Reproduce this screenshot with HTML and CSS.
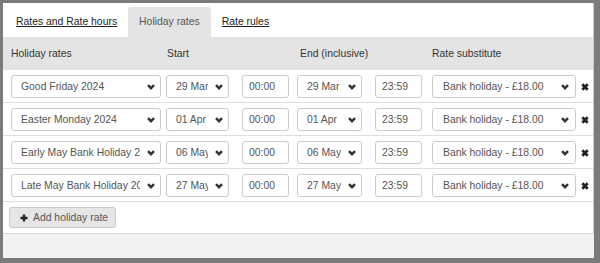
FILE: index.html
```html
<!DOCTYPE html>
<html>
<head>
<meta charset="utf-8">
<link rel="stylesheet" href="styles.css">
</head>
<body>
<div class="window">
  <div class="panel">
    <nav class="tabs">
      <a class="tab">Rates and Rate hours</a>
      <span class="tab active">Holiday rates</span>
      <a class="tab">Rate rules</a>
    </nav>
    <div class="grid head">
      <div class="h c1">Holiday rates</div>
      <div class="h c2">Start</div>
      <div class="h c4">End (inclusive)</div>
      <div class="h c6">Rate substitute</div>
    </div>

    <div class="grid row">
      <div class="sel w-name"><span class="val">Good Friday 2024</span><svg class="chev" viewBox="0 0 8 6"><path d="M1 1.2 L4 4.2 L7 1.2"/></svg></div>
      <div class="sel w-date"><span class="val">29 Mar</span><svg class="chev" viewBox="0 0 8 6"><path d="M1 1.2 L4 4.2 L7 1.2"/></svg></div>
      <div class="inp">00:00</div>
      <div class="sel w-edate"><span class="val">29 Mar</span><svg class="chev" viewBox="0 0 8 6"><path d="M1 1.2 L4 4.2 L7 1.2"/></svg></div>
      <div class="inp">23:59</div>
      <div class="sel w-rate"><span class="val">Bank holiday - £18.00</span><svg class="chev" viewBox="0 0 8 6"><path d="M1 1.2 L4 4.2 L7 1.2"/></svg></div>
      <svg class="del" viewBox="0 0 8 8"><path d="M1.3 1.3 L6.7 6.7 M6.7 1.3 L1.3 6.7"/></svg>
    </div>

    <div class="grid row">
      <div class="sel w-name"><span class="val">Easter Monday 2024</span><svg class="chev" viewBox="0 0 8 6"><path d="M1 1.2 L4 4.2 L7 1.2"/></svg></div>
      <div class="sel w-date"><span class="val">01 Apr</span><svg class="chev" viewBox="0 0 8 6"><path d="M1 1.2 L4 4.2 L7 1.2"/></svg></div>
      <div class="inp">00:00</div>
      <div class="sel w-edate"><span class="val">01 Apr</span><svg class="chev" viewBox="0 0 8 6"><path d="M1 1.2 L4 4.2 L7 1.2"/></svg></div>
      <div class="inp">23:59</div>
      <div class="sel w-rate"><span class="val">Bank holiday - £18.00</span><svg class="chev" viewBox="0 0 8 6"><path d="M1 1.2 L4 4.2 L7 1.2"/></svg></div>
      <svg class="del" viewBox="0 0 8 8"><path d="M1.3 1.3 L6.7 6.7 M6.7 1.3 L1.3 6.7"/></svg>
    </div>

    <div class="grid row">
      <div class="sel w-name"><span class="val">Early May Bank Holiday 2024</span><svg class="chev" viewBox="0 0 8 6"><path d="M1 1.2 L4 4.2 L7 1.2"/></svg></div>
      <div class="sel w-date"><span class="val">06 May</span><svg class="chev" viewBox="0 0 8 6"><path d="M1 1.2 L4 4.2 L7 1.2"/></svg></div>
      <div class="inp">00:00</div>
      <div class="sel w-edate"><span class="val">06 May</span><svg class="chev" viewBox="0 0 8 6"><path d="M1 1.2 L4 4.2 L7 1.2"/></svg></div>
      <div class="inp">23:59</div>
      <div class="sel w-rate"><span class="val">Bank holiday - £18.00</span><svg class="chev" viewBox="0 0 8 6"><path d="M1 1.2 L4 4.2 L7 1.2"/></svg></div>
      <svg class="del" viewBox="0 0 8 8"><path d="M1.3 1.3 L6.7 6.7 M6.7 1.3 L1.3 6.7"/></svg>
    </div>

    <div class="grid row">
      <div class="sel w-name"><span class="val">Late May Bank Holiday 2024</span><svg class="chev" viewBox="0 0 8 6"><path d="M1 1.2 L4 4.2 L7 1.2"/></svg></div>
      <div class="sel w-date"><span class="val">27 May</span><svg class="chev" viewBox="0 0 8 6"><path d="M1 1.2 L4 4.2 L7 1.2"/></svg></div>
      <div class="inp">00:00</div>
      <div class="sel w-edate"><span class="val">27 May</span><svg class="chev" viewBox="0 0 8 6"><path d="M1 1.2 L4 4.2 L7 1.2"/></svg></div>
      <div class="inp">23:59</div>
      <div class="sel w-rate"><span class="val">Bank holiday - £18.00</span><svg class="chev" viewBox="0 0 8 6"><path d="M1 1.2 L4 4.2 L7 1.2"/></svg></div>
      <svg class="del" viewBox="0 0 8 8"><path d="M1.3 1.3 L6.7 6.7 M6.7 1.3 L1.3 6.7"/></svg>
    </div>

    <div class="actions">
      <button class="btn"><svg class="plus" viewBox="0 0 8 8"><path d="M4 0.5 V7.5 M0.5 4 H7.5"/></svg>Add holiday rate</button>
    </div>
  </div>
</div>
</body>
</html>
```

FILE: styles.css
```css
* { box-sizing: border-box; }
html, body { margin: 0; }
body {
  background: #7b7b7b;
  padding: 3px 6px 5px 3px;
  height: 263px;
  font-family: "Liberation Sans", Arial, sans-serif;
  font-size: 10.4px;
  color: #333;
}
.window {
  background: #f1f2f4;
  height: 255px;
}
.panel {
  background: #fff;
  height: 231px;
  border-right: 1px solid #c9c9c9;
  border-bottom: 1px solid #d6d6d6;
}
.tabs {
  display: flex;
  height: 34px;
  padding: 4px 0 0 2px;
}
.tab {
  display: block;
  height: 30px;
  line-height: 30px;
  padding: 0 11px;
  color: #222;
  text-decoration: underline;
}
.tab.active {
  background: #e4e4e4;
  border-radius: 3px 3px 0 0;
  color: #555;
  text-decoration: none;
}
.grid {
  display: grid;
  grid-template-columns: 155px 76px 55px 78px 57px 149px 1fr;
  align-items: center;
  padding-left: 8px;
}
.head {
  background: #e4e4e4;
  height: 33px;
  color: #333;
}
.h.c1 { grid-column: 1; }
.h.c2 { grid-column: 2 / span 2; padding-left: 1px; }
.h.c4 { grid-column: 4 / span 2; padding-left: 3px; }
.h.c6 { grid-column: 6 / span 2; }
.row {
  height: 33px;
  border-bottom: 1px solid #dedede;
  padding-top: 1px;
}
.sel, .inp {
  height: 23px;
  border: 1px solid #ccc;
  border-radius: 3px;
  color: #555;
  background: #fff;
  display: flex;
  align-items: center;
}
.sel { padding-left: 9px; padding-right: 5px; }
.val {
  flex: 1;
  min-width: 0;
  overflow: hidden;
  white-space: nowrap;
}
.chev {
  width: 8px;
  height: 6px;
  margin-left: 7px;
  flex: none;
  fill: none;
  stroke: #333;
  stroke-width: 2.5;
}
.inp { padding-left: 6px; width: 47px; }
.w-name { width: 150px; }
.w-date { width: 63px; }
.w-edate { width: 65px; }
.w-rate { width: 144px; padding-left: 10px; padding-right: 6px; }
.del {
  width: 8px;
  height: 8px;
  fill: none;
  stroke: #222;
  stroke-width: 2.8;
}
.actions {
  padding: 5px 0 0 6px;
}
.btn {
  display: flex;
  align-items: center;
  height: 21px;
  width: 107px;
  padding: 0 0 0 10px;
  background: #e6e6e6;
  border: 1px solid #c8c8c8;
  border-radius: 3px;
  font: inherit;
  color: #555;
}
.plus {
  width: 8px;
  height: 8px;
  margin-right: 5px;
  fill: none;
  stroke: #222;
  stroke-width: 2.4;
}
```
